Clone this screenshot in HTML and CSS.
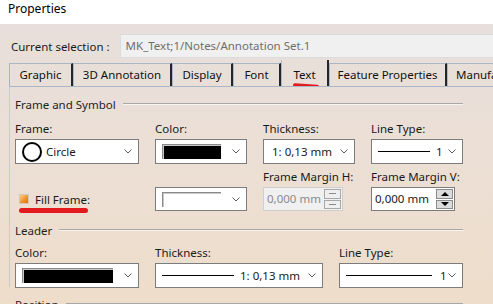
FILE: index.html
```html
<!DOCTYPE html>
<html lang="en">
<head>
    <meta charset="UTF-8">
    <title>Properties</title>
    <link rel="stylesheet" href="styles.css">
</head>
<body>
    <div class="titlebar">Properties</div>
    <div class="dialog">
        <div class="selection">
            <span class="sel-label">Current selection :</span>
            <div class="sel-box">MK_Text;1/Notes/Annotation Set.1</div>
        </div>

        <div class="tabs">
            <div class="tab tab-graphic">Graphic</div>
            <div class="tab tab-3d">3D Annotation</div>
            <div class="tab tab-display">Display</div>
            <div class="tab tab-font">Font</div>
            <div class="tab tab-text active">Text<span class="mark mark-tab"></span></div>
            <div class="tab tab-feature">Feature Properties</div>
            <div class="tab tab-manuf">Manufacturing</div>
        </div>

        <div class="panel">
            <!-- Frame and Symbol -->
            <div class="group-title"><span>Frame and Symbol</span><i class="rule"></i></div>
            <div class="frame-grid">
                <div class="field">
                    <label>Frame:</label>
                    <div class="combo">
                        <span class="circle"></span>
                        <span class="value">Circle</span>
                        <svg class="chev" width="8" height="5" viewBox="0 0 8 5"><polyline points="0.5,0.5 4,4 7.5,0.5"/></svg>
                    </div>
                </div>
                <div class="field">
                    <label>Color:</label>
                    <div class="combo">
                        <span class="swatch black"></span>
                        <svg class="chev" width="8" height="5" viewBox="0 0 8 5"><polyline points="0.5,0.5 4,4 7.5,0.5"/></svg>
                    </div>
                </div>
                <div class="field">
                    <label>Thickness:</label>
                    <div class="combo">
                        <span class="value right">1: 0,13 mm</span>
                        <svg class="chev" width="8" height="5" viewBox="0 0 8 5"><polyline points="0.5,0.5 4,4 7.5,0.5"/></svg>
                    </div>
                </div>
                <div class="field">
                    <label>Line Type:</label>
                    <div class="combo">
                        <span class="line"></span>
                        <span class="value">1</span>
                        <svg class="chev" width="8" height="5" viewBox="0 0 8 5"><polyline points="0.5,0.5 4,4 7.5,0.5"/></svg>
                    </div>
                </div>

                <div class="field">
                    <label>&nbsp;</label>
                    <div class="check-row">
                        <span class="check"></span>
                        <span class="check-label">Fill Frame:<span class="mark mark-fill"></span></span>
                    </div>
                </div>
                <div class="field">
                    <label>&nbsp;</label>
                    <div class="combo short">
                        <span class="swatch white"></span>
                        <svg class="chev" width="8" height="5" viewBox="0 0 8 5"><polyline points="0.5,0.5 4,4 7.5,0.5"/></svg>
                    </div>
                </div>
                <div class="field">
                    <label>Frame Margin H:</label>
                    <div class="spin disabled">
                        <span class="spin-text">0,000 mm</span>
                        <span class="spin-btns"><b class="up"></b><b class="down"></b></span>
                    </div>
                </div>
                <div class="field">
                    <label>Frame Margin V:</label>
                    <div class="spin">
                        <span class="spin-text">0,000 mm</span>
                        <span class="spin-btns"><b class="up"></b><b class="down"></b></span>
                    </div>
                </div>
            </div>

            <!-- Leader -->
            <div class="group-title leader"><span>Leader</span><i class="rule"></i></div>
            <div class="leader-grid">
                <div class="field">
                    <label>Color:</label>
                    <div class="combo">
                        <span class="swatch black"></span>
                        <svg class="chev" width="8" height="5" viewBox="0 0 8 5"><polyline points="0.5,0.5 4,4 7.5,0.5"/></svg>
                    </div>
                </div>
                <div class="field">
                    <label>Thickness:</label>
                    <div class="combo">
                        <span class="line wide"></span>
                        <span class="value right">1: 0,13 mm</span>
                        <svg class="chev" width="8" height="5" viewBox="0 0 8 5"><polyline points="0.5,0.5 4,4 7.5,0.5"/></svg>
                    </div>
                </div>
                <div class="field">
                    <label>Line Type:</label>
                    <div class="combo">
                        <span class="line wide"></span>
                        <span class="value">1</span>
                        <svg class="chev" width="8" height="5" viewBox="0 0 8 5"><polyline points="0.5,0.5 4,4 7.5,0.5"/></svg>
                    </div>
                </div>
            </div>

            <div class="group-title position"><span>Position</span><i class="rule"></i></div>
        </div>
    </div>
</body>
</html>
```

FILE: styles.css
```css
body {
    margin: 0;
    width: 493px;
    height: 304px;
    overflow: hidden;
    font-family: "Noto Sans", "DejaVu Sans", sans-serif;
    font-size: 11.5px;
    color: #1a1a1a;
}

.titlebar {
    height: 24px;
    line-height: 18px;
    padding-left: 8px;
    background: #fff;
    color: #000;
    font-size: 12px;
}

.dialog {
    height: 280px;
    background: linear-gradient(180deg, #e7dfdb 0%, #ebdfd6 40%, #eeddca 100%);
}

/* current selection row */
.selection {
    display: flex;
    align-items: center;
    padding: 10px 0 0 11px;
    gap: 10px;
}

.sel-box {
    flex: 1;
    height: 22px;
    line-height: 22px;
    padding-left: 5px;
    background: #f0f0f0;
    border: 1px solid #dcdcdc;
    border-right: none;
    color: #6e6e6e;
    white-space: nowrap;
    overflow: hidden;
}

/* tabs */
.tabs {
    display: flex;
    align-items: flex-end;
    margin: 2px 0 0 9px;
    height: 26px;
    white-space: nowrap;
    overflow: hidden;
}

.tab {
    position: relative;
    height: 22px;
    line-height: 22px;
    text-align: center;
    border-top: 1px solid #a9b6c6;
    border-left: 1px solid #a9b6c6;
    border-right: 2px solid #262626;
    color: #111;
    flex: none;
}

.tab-graphic { width: 61px; }
.tab-3d { width: 96px; }
.tab-display { width: 58px; }
.tab-font { width: 45px; }
.tab-text { width: 45px; }
.tab-feature { width: 115px; }
.tab-manuf { width: 80px; text-align: left; padding-left: 8px; border-right: none; }

.tab.active {
    height: 26px;
    line-height: 30px;
}

.mark {
    position: absolute;
    display: block;
    background: #e31b1f;
    border-radius: 3px;
    height: 4px;
}

.mark-tab {
    left: 11px;
    top: 24px;
    width: 26px;
    transform: rotate(4deg);
}

.mark-fill {
    left: -16px;
    top: 16px;
    width: 69px;
    height: 5px;
}

/* panel */
.panel {
    border-top: 1px solid #a9b6c6;
    border-left: 1px solid #c3ccd6;
    margin-left: 9px;
    padding-left: 5px;
    height: 200px;
}

.group-title {
    display: flex;
    align-items: center;
    gap: 7px;
    width: 448px;
    height: 14px;
    line-height: 14px;
    margin-top: 11px;
    color: #1e1e1e;
}

.group-title .rule {
    flex: 1;
    height: 1px;
    background: #a8a8a8;
    border-bottom: 1px solid #f8f4f0;
    margin-top: -2px;
}

.group-title.leader { margin-top: 13px; }
.group-title.position { margin-top: 10px; }

.frame-grid {
    display: grid;
    grid-template-columns: 124px 92px 92px 92px;
    column-gap: 16px;
    row-gap: 6px;
    margin-top: 10px;
}

.leader-grid {
    display: grid;
    grid-template-columns: 124px 168px 124px;
    column-gap: 16px;
    margin-top: 8px;
}

.field {
    display: flex;
    flex-direction: column;
    gap: 3px;
}

.field label {
    height: 14px;
    line-height: 14px;
    white-space: nowrap;
}

/* combo boxes */
.combo {
    display: flex;
    align-items: center;
    height: 23px;
    padding: 0 6px 0 6px;
    background: #fff;
    border: 1px solid #7c7c7c;
}

.combo.short { height: 22px; }

.combo .value {
    flex: 1;
    white-space: nowrap;
}

.combo .value.right {
    text-align: right;
    padding-right: 8px;
}

.chev {
    flex: none;
    fill: none;
    stroke: #5a5a5a;
    stroke-width: 1;
}

.circle {
    flex: none;
    width: 16px;
    height: 16px;
    border: 2px solid #000;
    border-radius: 50%;
    margin-right: 4px;
}

.swatch {
    flex: 1;
    height: 14px;
    margin-right: 11px;
    border-top: 1px solid #8a8a8a;
    border-left: 1px solid #8a8a8a;
    box-shadow: inset 1px 1px 0 #c8c8c8;
}

.swatch.black { background: #000; }
.swatch.white { background: #fff; }

.line {
    flex: none;
    width: 52px;
    height: 1px;
    background: #000;
    margin-right: 6px;
}

.line.wide { width: 72px; }
.leader-grid .field:nth-child(3) .line { width: 86px; margin-right: 8px; }

/* checkbox */
.check-row {
    display: flex;
    align-items: center;
    gap: 6px;
    height: 24px;
    padding-left: 4px;
}

.check {
    width: 8px;
    height: 8px;
    border: 1px solid #d9c9b4;
    background: linear-gradient(135deg, #fbd08a 0%, #f0952c 55%, #d8741a 100%);
}

.check-label {
    position: relative;
    color: #1a1a1a;
}

/* spin boxes */
.spin {
    display: flex;
    align-items: stretch;
    width: 82px;
    height: 22px;
    background: #fff;
    border: 1px solid #7c7c7c;
}

.spin.disabled {
    width: 78px;
    background: #f0f0f0;
    border-color: #cfcfcf;
    color: #8a8a8a;
}

.spin-text {
    flex: 1;
    line-height: 22px;
    padding-left: 3px;
    white-space: nowrap;
}

.spin-btns {
    display: flex;
    flex-direction: column;
    gap: 1px;
    width: 17px;
    padding: 1px 1px 1px 0;
}

.spin-btns b {
    flex: 1;
    display: flex;
    align-items: center;
    justify-content: center;
    background: #dcdcdc;
    border: 1px solid #8c8c8c;
}

.spin-btns b::after {
    content: "";
    width: 0;
    height: 0;
    border-left: 4px solid transparent;
    border-right: 4px solid transparent;
}

.spin-btns .up::after {
    border-bottom: 4px solid #000;
}

.spin-btns .down::after {
    border-top: 4px solid #000;
}

.spin.disabled .spin-btns b {
    background: #efefef;
    border-color: #a8a8a8;
}

.spin.disabled .spin-btns b::after {
    border: none;
    width: 7px;
    height: 1px;
    background: #8a8a8a;
}
```
